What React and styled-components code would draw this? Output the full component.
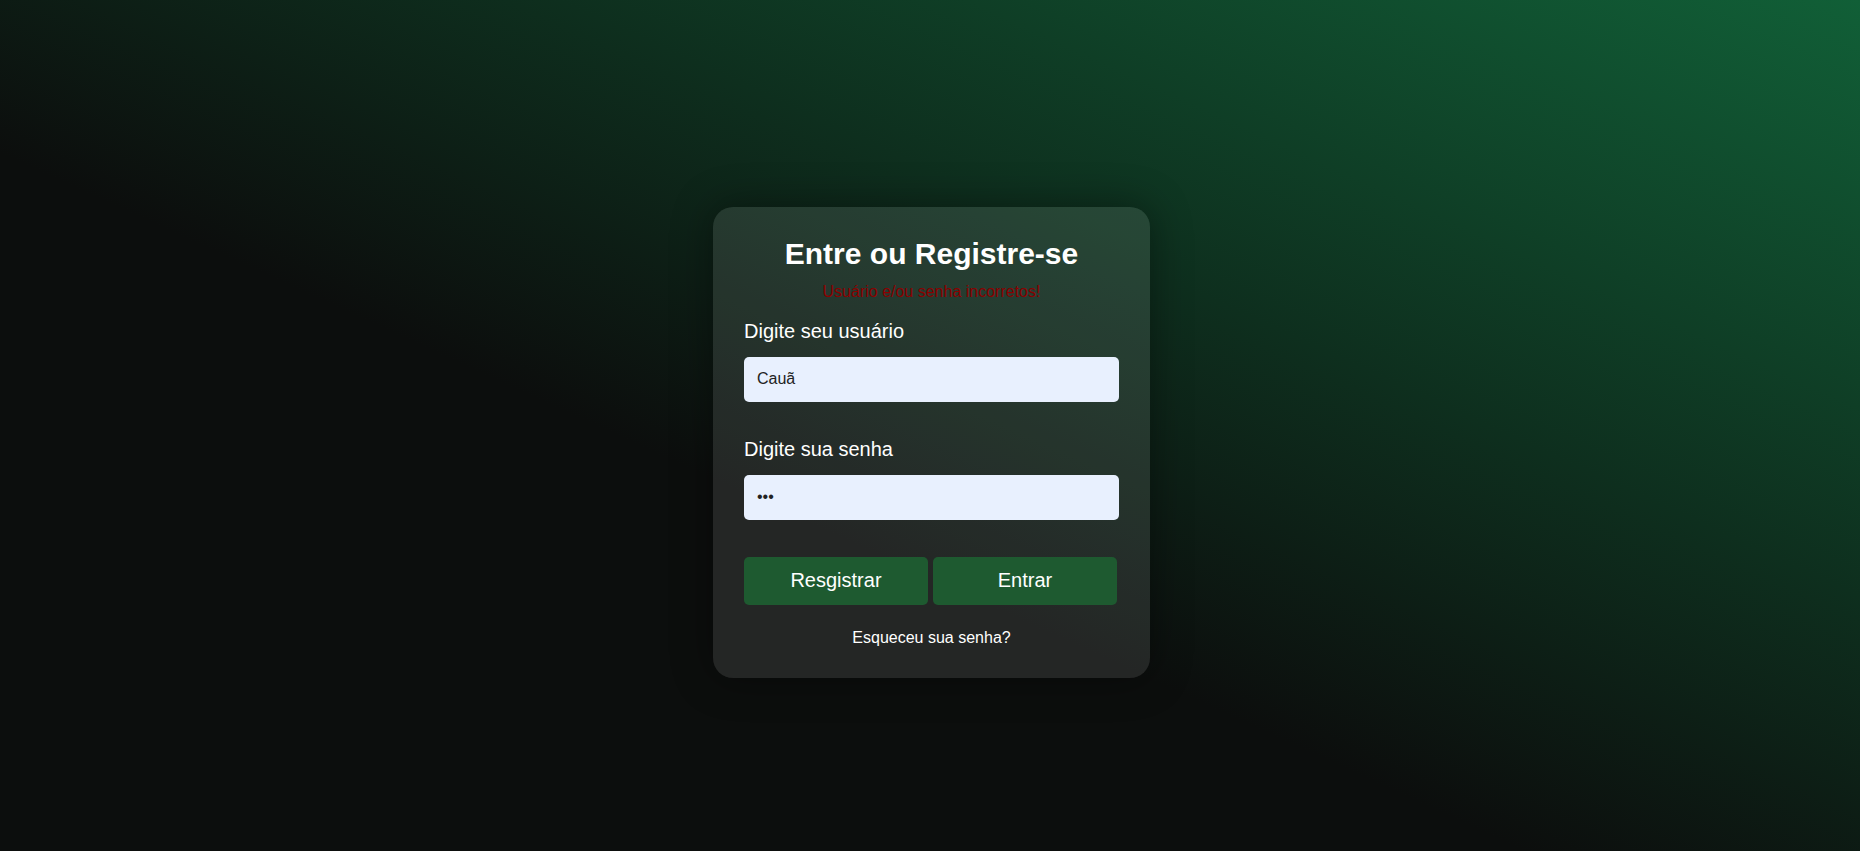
import React from 'react';
import styled, { createGlobalStyle } from 'styled-components';

const GlobalStyle = createGlobalStyle`
  * {
    box-sizing: border-box;
  }

  body {
    margin: 0;
    font-family: 'Liberation Sans', Arial, sans-serif;
    background: #0c0e0d;
  }
`;

const Page = styled.main`
  min-height: 100vh;
  display: flex;
  align-items: center;
  justify-content: center;
  padding: 33px 0 0 3px;
  background: linear-gradient(to top right, #0c0e0d 41%, #115f37 100%);
`;

const Card = styled.form`
  width: 437px;
  padding: 30px 31px 31px;
  display: flex;
  flex-direction: column;
  background: rgba(255, 255, 255, 0.1);
  border-radius: 20px;
  box-shadow: 0 0 40px rgba(0, 0, 0, 0.4);
`;

const Title = styled.h1`
  margin: 0;
  font-size: 30px;
  font-weight: bold;
  color: #fff;
  text-align: center;
`;

const ErrorText = styled.p`
  margin: 12px 0 19px;
  font-size: 16px;
  color: #8b0000;
  text-align: center;
`;

const Field = styled.div`
  display: flex;
  flex-direction: column;
  margin-bottom: ${(props) => props.$spacing || '0'};
`;

const Label = styled.label`
  font-size: 20px;
  color: #fff;
  margin-bottom: 14px;
`;

const Input = styled.input`
  width: 100%;
  height: 45px;
  padding: 0 13px;
  border: none;
  border-radius: 5px;
  background: #e8f0fe;
  color: #222;
  font-family: 'Liberation Sans', Arial, sans-serif;
  font-size: 16px;
  outline: none;
`;

const Actions = styled.div`
  display: flex;
  gap: 5px;
  margin-top: 37px;
`;

const Button = styled.button`
  width: 184px;
  height: 48px;
  border: none;
  border-radius: 5px;
  background: #1e5a30;
  color: #fff;
  font-family: 'Liberation Sans', Arial, sans-serif;
  font-size: 20px;
  cursor: pointer;
`;

const Forgot = styled.a`
  margin-top: 24px;
  font-size: 16px;
  color: #fff;
  text-align: center;
  text-decoration: none;
  cursor: pointer;
`;

const App = () => {
  return (
    <>
      <GlobalStyle />
      <Page>
        <Card onSubmit={(e) => e.preventDefault()}>
          <Title>Entre ou Registre-se</Title>
          <ErrorText>Usuário e/ou senha incorretos!</ErrorText>
          <Field $spacing="36px">
            <Label htmlFor="user">Digite seu usuário</Label>
            <Input id="user" type="text" defaultValue="Cauã" />
          </Field>
          <Field>
            <Label htmlFor="pass">Digite sua senha</Label>
            <Input id="pass" type="password" defaultValue="abc" />
          </Field>
          <Actions>
            <Button type="button">Resgistrar</Button>
            <Button type="submit">Entrar</Button>
          </Actions>
          <Forgot>Esqueceu sua senha?</Forgot>
        </Card>
      </Page>
    </>
  );
};

export default App;
